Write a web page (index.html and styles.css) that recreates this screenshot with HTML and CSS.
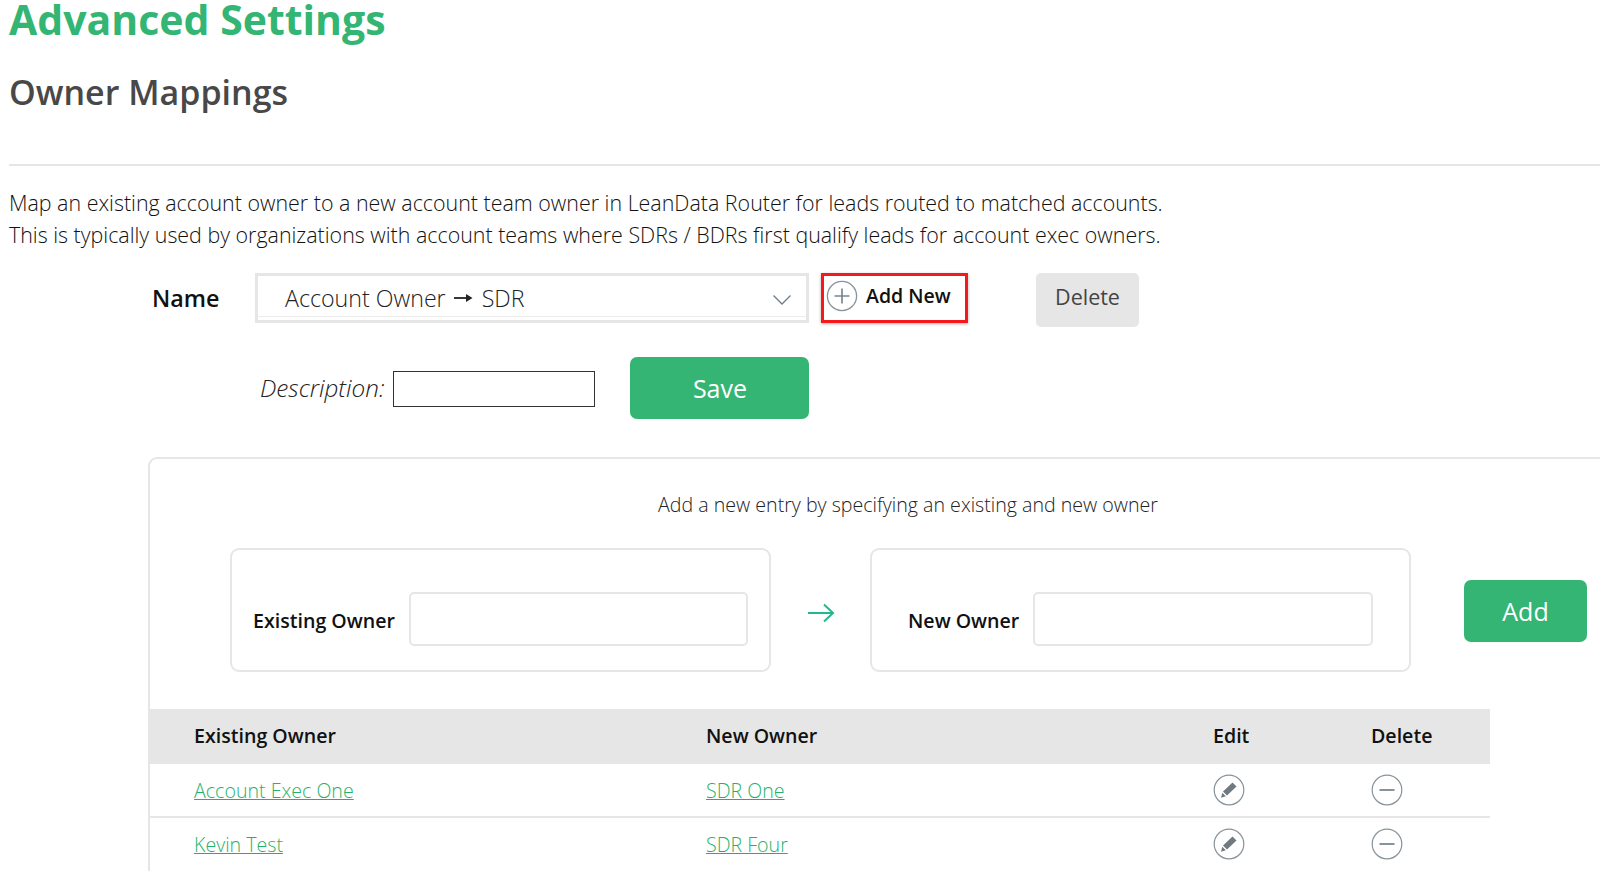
FILE: index.html
```html
<!DOCTYPE html>
<html lang="en">
<head>
<meta charset="utf-8">
<title>Owner Mappings</title>
<link rel="stylesheet" href="styles.css">
</head>
<body>
<main class="page">
  <h1 class="title">Advanced Settings</h1>
  <h2 class="subtitle">Owner Mappings</h2>
  <hr class="rule">
  <p class="intro">Map an existing account owner to a new account team owner in LeanData Router for leads routed to matched accounts.<br>This is typically used by organizations with account teams where SDRs / BDRs first qualify leads for account exec owners.</p>

  <div class="name-row">
    <span class="name-label">Name</span>
    <div class="select">
      <span class="select-value">Account Owner <svg class="inline-arrow" width="19" height="12" viewBox="0 0 19 12"><path d="M0 6 H14" stroke="#222" stroke-width="1.8"/><path d="M12 2 L18.5 6 L12 10 Z" fill="#222"/></svg> SDR</span>
      <svg class="chevron" width="20" height="12" viewBox="0 0 20 12"><path d="M1.5 1.5 L10 10 L18.5 1.5" fill="none" stroke="#6d7b88" stroke-width="1.3"/></svg>
    </div>
    <div class="add-new">
      <svg class="circle-icon" width="32" height="32" viewBox="0 0 32 32"><circle cx="16" cy="16" r="14.6" fill="none" stroke="#87929a" stroke-width="1.3"/><path d="M16 8.5 V23.5 M8.5 16 H23.5" stroke="#7b8790" stroke-width="1.7"/></svg>
      <span class="add-new-text">Add New</span>
    </div>
    <button class="btn-delete" type="button">Delete</button>
  </div>

  <div class="desc-row">
    <label class="desc-label">Description:</label>
    <input class="desc-input" type="text">
    <button class="btn-green btn-save" type="button">Save</button>
  </div>

  <section class="panel">
    <p class="panel-caption">Add a new entry by specifying an existing and new owner</p>
    <div class="entry-row">
      <div class="owner-box owner-existing">
        <span class="owner-label">Existing Owner</span>
        <input class="owner-input" type="text">
      </div>
      <svg class="entry-arrow" width="28" height="20" viewBox="0 0 28 20"><path d="M1 10 H26 M17 1.5 L26 10 L17 18.5" fill="none" stroke="#1fb892" stroke-width="2"/></svg>
      <div class="owner-box owner-new">
        <span class="owner-label">New Owner</span>
        <input class="owner-input" type="text">
      </div>
      <button class="btn-green btn-add" type="button">Add</button>
    </div>

    <div class="table">
      <div class="tr th">
        <span>Existing Owner</span><span>New Owner</span><span>Edit</span><span>Delete</span>
      </div>
      <div class="tr row">
        <a class="link" href="#">Account Exec One</a><a class="link" href="#">SDR One</a>
        <span class="cell-icon"><svg width="32" height="32" viewBox="0 0 32 32"><circle cx="16" cy="16" r="14.8" fill="none" stroke="#87929a" stroke-width="1.2"/><path d="M19.5 8.5 L23.5 12.5 L14 21.5 L10 17.5 Z M9.3 18.8 L12.8 22.3 L8 23.8 Z" fill="#6f7b80"/></svg></span>
        <span class="cell-icon"><svg width="32" height="32" viewBox="0 0 32 32"><circle cx="16" cy="16" r="14.8" fill="none" stroke="#87929a" stroke-width="1.2"/><path d="M8.5 16 H23.5" stroke="#7b8790" stroke-width="1.8"/></svg></span>
      </div>
      <div class="tr row">
        <a class="link" href="#">Kevin Test</a><a class="link" href="#">SDR Four</a>
        <span class="cell-icon"><svg width="32" height="32" viewBox="0 0 32 32"><circle cx="16" cy="16" r="14.8" fill="none" stroke="#87929a" stroke-width="1.2"/><path d="M19.5 8.5 L23.5 12.5 L14 21.5 L10 17.5 Z M9.3 18.8 L12.8 22.3 L8 23.8 Z" fill="#6f7b80"/></svg></span>
        <span class="cell-icon"><svg width="32" height="32" viewBox="0 0 32 32"><circle cx="16" cy="16" r="14.8" fill="none" stroke="#87929a" stroke-width="1.2"/><path d="M8.5 16 H23.5" stroke="#7b8790" stroke-width="1.8"/></svg></span>
      </div>
    </div>
  </section>
</main>
</body>
</html>
```
FILE: styles.css
```css
* { box-sizing: border-box; }
html, body { margin: 0; height: 100%; overflow: hidden; background: #fff; }
body { font-family: "Open Sans", "Liberation Sans", sans-serif; color: #1c1c1c; }
.page { width: 1600px; height: 871px; overflow: hidden; padding-left: 9px; }

.title { margin: 0; font-size: 41px; line-height: 38px; font-weight: 700; color: #33b573; }
.subtitle { margin: 31px 0 0; font-size: 34px; line-height: 46px; font-weight: 600; color: #484848; }
.rule { margin: 49px 0 0; border: 0; height: 2px; background: #e6e6e6; }
.intro { margin: 21px 0 0; font-size: 21.42px; line-height: 32px; font-weight: 300; color: #111; }

.name-row { display: flex; align-items: flex-start; margin: 22px 0 0 143px; }
.name-label { width: 103px; font-size: 23.3px; line-height: 50px; font-weight: 600; color: #111; }
.select { display: flex; align-items: center; justify-content: space-between; width: 554px; height: 50px; border: 3px solid #e6e6e6; padding: 0 14px 0 27px; background: #fff; box-shadow: inset 0 -3px 0 #fff, inset 0 -4px 0 #ececec; }
.select-value { font-size: 23.2px; font-weight: 300; color: #222; }
.inline-arrow { margin: 0 3px 3px 2px; }
.chevron { margin-top: 4px; }
.add-new { display: flex; align-items: center; width: 147px; height: 50px; margin-left: 12px; padding: 0 0 4px 2px; border: 3px solid #f5191b; box-shadow: 0 1px 3px rgba(0,0,0,.3); }
.circle-icon { flex: none; }
.add-new-text { margin: 0 0 2px 8px; font-size: 19.5px; font-weight: 600; color: #111; }
.btn-delete { width: 103px; height: 54px; margin-left: 68px; padding: 0 0 7px; border: 0; border-radius: 5px; background: #e6e6e6; font: 400 21.5px "Open Sans", sans-serif; color: #444; }

.desc-row { display: flex; align-items: center; margin: 30px 0 0 251px; height: 62px; }
.desc-label { margin-bottom: 2px; font-size: 24.3px; font-style: italic; font-weight: 300; color: #222; }
.desc-input { width: 202px; height: 36px; margin: 2px 0 0 9px; border: 1.5px solid #333; background: #fff; }
.btn-green { border: 0; border-radius: 7px; background: #34b574; color: #fff; font: 400 25px "Open Sans", sans-serif; }
.btn-save { width: 179px; height: 62px; margin-left: 35px; }

.panel { margin: 38px 0 0 139px; width: 1500px; height: 500px; border: 2px solid #e6e6e6; border-radius: 9px; }
.panel-caption { margin: 32px 0 0; width: 1516px; text-align: center; font-size: 19.6px; line-height: 28px; font-weight: 300; color: #222; }
.entry-row { display: flex; align-items: flex-start; margin: 29px 0 0 80px; }
.owner-box { display: flex; align-items: center; width: 541px; height: 124px; border: 2px solid #e6e6e6; border-radius: 9px; }
.owner-existing { padding: 21px 21px 0 21px; }
.owner-new { padding: 21px 36px 0 36px; margin-left: 35px; }
.owner-label { flex: none; font-size: 19.6px; font-weight: 600; color: #111; }
.owner-input { flex: 1; min-width: 0; height: 54px; margin: -3px 0 0 14px; border: 2px solid #e6e6e6; border-radius: 5px; background: #fff; }
.entry-arrow { flex: none; margin: 55px 0 0 36px; }
.btn-add { flex: none; width: 123px; height: 62px; margin: 32px 0 0 53px; }

.table { margin-top: 37px; width: 1340px; }
.tr { display: grid; grid-template-columns: 512px 507px 158px 1fr; align-items: center; padding-left: 44px; }
.th { height: 55px; padding-bottom: 2px; background: #e6e6e6; font-size: 19.6px; font-weight: 600; color: #111; }
.row { height: 54px; border-bottom: 2px solid #e6e6e6; }
.row:last-child { height: 52px; border-bottom: 0; }
.link { font-size: 19.6px; font-weight: 300; color: #1fb26a; text-decoration: underline; justify-self: start; }
.cell-icon { display: flex; }
```
